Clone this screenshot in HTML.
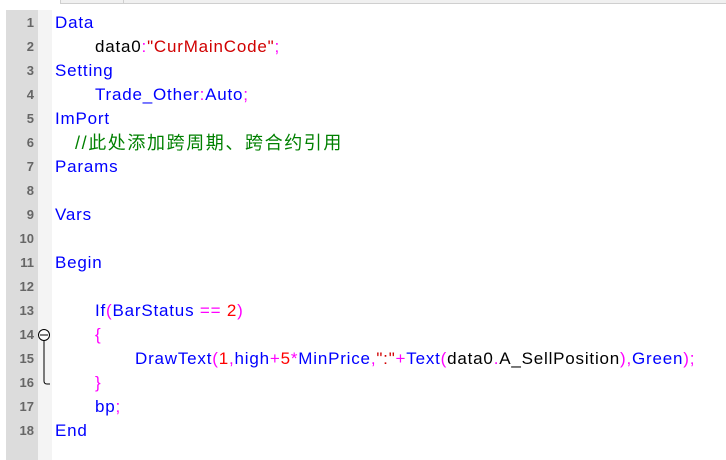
<!DOCTYPE html>
<html><head><meta charset="utf-8"><style>
html,body{margin:0;padding:0;width:726px;height:460px;overflow:hidden;background:#fff;}
.top{position:absolute;left:60px;top:0;width:666px;height:3px;background:#f0f0f0;border-bottom:1px solid #cfcfcf;}
.top i{position:absolute;top:0;width:1px;height:3px;background:#cfcfcf}
.gut{position:absolute;left:6px;top:10px;width:32px;height:450px;background:#dcdcdc;}
.chk{position:absolute;left:38px;top:10px;width:14px;height:450px;background:#f4f4f4;}
.ln{position:absolute;left:6px;width:28px;text-align:right;font:bold 13px/20px "Liberation Sans",sans-serif;color:#666;}
.cl{position:absolute;left:55px;font:17px/20px "Liberation Sans","Noto Sans CJK SC",sans-serif;white-space:pre;color:#00f;letter-spacing:0.8px}
.m{color:#f0f}.r{color:#f00}.s{color:#d00000}.k{color:#000}.g{color:#008000;font-size:18px;letter-spacing:1.6px}
</style></head><body>
<div class="top"><i style="left:0"></i><i style="left:63px"></i></div>
<div class="gut"></div><div class="chk"></div>
<svg style="position:absolute;left:36px;top:327px" width="20" height="65"><circle cx="8" cy="8" r="5.5" fill="#fff" stroke="#000"/><line x1="4" y1="8" x2="12" y2="8" stroke="#000"/><path d="M8 13.5V54Q8 57 11 57H14" fill="none" stroke="#000"/></svg>
<div id="c"></div>
<script>
var L=[
[0,'Data'],
[40,'<span class="k">data0</span><span class="m">:</span><span class="s">"CurMainCode"</span><span class="m">;</span>'],
[0,'Setting'],
[40,'Trade_Other<span class="m">:</span>Auto<span class="m">;</span>'],
[0,'ImPort'],
[20,'<span class="g">//此处添加跨周期、跨合约引用</span>'],
[0,'Params'],[0,''],[0,'Vars'],[0,''],[0,'Begin'],[0,''],
[40,'If<span class="m">(</span>BarStatus <span class="m">==</span> <span class="r">2</span><span class="m">)</span>'],
[40,'<span class="m">{</span>'],
[80,'DrawText<span class="m">(</span><span class="r">1</span><span class="m">,</span>high<span class="m">+</span><span class="r">5</span><span class="m">*</span>MinPrice<span class="m">,</span><span class="s">":"</span><span class="m">+</span>Text<span class="m">(</span><span class="k">data0</span><span class="m">.</span><span class="k">A_SellPosition</span><span class="m">),</span>Green<span class="m">);</span>'],
[40,'<span class="m">}</span>'],
[40,'bp<span class="m">;</span>'],
[0,'End']];
var h='';
for(var i=0;i<L.length;i++){var y=13+i*24;
h+='<div class="ln" style="top:'+y+'px">'+(i+1)+'</div><div class="cl" style="top:'+y+'px;left:'+(55+L[i][0])+'px">'+L[i][1]+'</div>';}
document.getElementById('c').innerHTML=h;
</script>
</body></html>
